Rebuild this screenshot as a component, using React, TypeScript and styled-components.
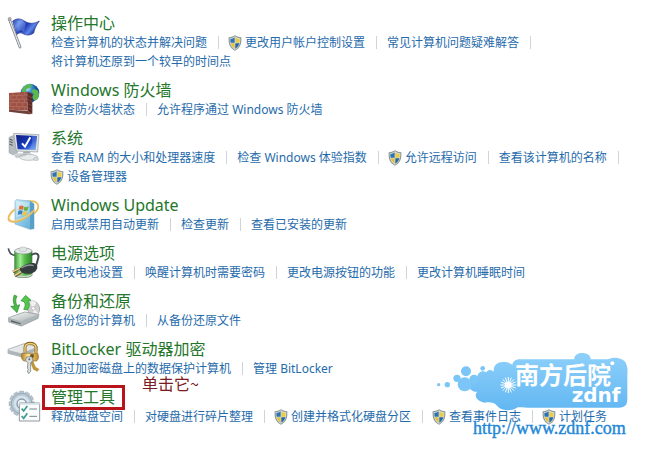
import React from 'react';
import styled, { createGlobalStyle } from 'styled-components';

const GlobalStyle = createGlobalStyle`
  * { box-sizing: border-box; }
  body {
    margin: 0;
    background: #fff;
    font-family: "Noto Sans", "Noto Sans CJK SC", sans-serif;
    font-size: 12px;
  }
`;

const Page = styled.main`
  padding: 13px 8px;
  overflow: hidden;
`;

const Section = styled.section`
  position: relative;
  display: grid;
  grid-template-columns: 32px 1fr;
  column-gap: 11px;
  margin-bottom: 9px;
`;

const IconBox = styled.div`
  padding-top: 4px;
  height: 36px;
  svg { display: block; width: 32px; height: 32px; overflow: visible; }
`;

const Title = styled.h2`
  margin: 0;
  height: 20px;
  font-size: 16px;
  line-height: 20px;
  font-weight: 400;
`;

const TitleLink = styled.a`
  color: #23762a;
  text-decoration: none;
`;

const LinkList = styled.ul`
  display: flex;
  flex-wrap: wrap;
  margin: 0;
  padding: 0;
  list-style: none;
`;

const LinkItem = styled.li`
  display: flex;
  align-items: center;
  height: 19px;
  white-space: nowrap;
  &:not(:last-child)::after {
    content: "";
    width: 1px;
    height: 13px;
    margin: 0 10px 0 11px;
    background: #cfd4d8;
  }
`;

const TaskLink = styled.a`
  display: flex;
  align-items: center;
  color: #1f6bab;
  line-height: 19px;
  text-decoration: none;
  svg { flex: none; width: 14px; height: 16px; margin: 0 3px 0 -1px; }
`;

const Highlight = styled.div`
  position: absolute;
  left: 34px;
  top: -2px;
  width: 83px;
  height: 25px;
  border: 3px solid #b9131c;
  pointer-events: none;
`;

const Note = styled.span`
  position: absolute;
  left: 134px;
  top: -14px;
  color: #7b1c22;
  font-size: 16px;
  line-height: 20px;
  font-family: "Noto Sans CJK SC", sans-serif;
`;

const Watermark = styled.div`
  position: absolute;
  right: 9px;
  top: -37px;
  width: 196px;
  pointer-events: none;
  svg { display: block; width: 196px; height: 64px; }
`;

const SiteLink = styled.a`
  display: block;
  margin: 4px 0 0 37px;
  color: #2387d6;
  font-family: "Liberation Serif", serif;
  font-size: 18px;
  line-height: 20px;
  text-decoration: none;
  white-space: nowrap;
  -webkit-text-stroke: 0.4px #2387d6;
`;

const Shield = () => (
  <svg viewBox="0 0 42 48" aria-hidden="true">
    <path d="M21 1C15 5 9 7 2 7c-1 19 2 32 19 40C38 39 41 26 40 7 33 7 27 5 21 1z" fill="#8c9698" />
    <path d="M21 4C16 8 11 10 5 10c0 16 3 27 16 34 13-7 16-18 16-34-6 0-11-2-16-6z" fill="#dbe3df" />
    <path d="M20 7c-4 3-8 5-13 5 0 4 0 8 1 11h12z" fill="#2e73b4" />
    <path d="M22 7c4 3 8 5 13 5 0 4 0 8-1 11H22z" fill="#e9cc4a" />
    <path d="M8 25h12v16C13 37 10 32 8 25z" fill="#e3c33e" />
    <path d="M34 25H22v16c7-4 10-9 12-16z" fill="#2865a4" />
  </svg>
);

const FlagIcon = () => (
  <svg viewBox="0 0 96 96" aria-hidden="true">
    <defs>
      <linearGradient id="flag" x2="1" y2=".5">
        <stop offset="0" stopColor="#2741a5" /><stop offset=".3" stopColor="#6b91ea" />
        <stop offset=".55" stopColor="#1c36b0" /><stop offset=".8" stopColor="#5c86e8" /><stop offset="1" stopColor="#1a2e94" />
      </linearGradient>
    </defs>
    <path d="M14 12C28 2 40 5 51 13c14 9 28 7 43-1-9 12-14 23-17 36-11 8-23 8-34 1-5-3-12-1-17 4z" fill="url(#flag)" stroke="#25368d" strokeWidth="2" />
    <path d="M26 12c13-5 20 2 28 8l-7 24c-6-5-12-5-17 0" fill="#90b1f4" opacity=".35" />
    <path d="M5 9l31 81" stroke="#777b84" strokeWidth="8" strokeLinecap="round" />
    <path d="M5 9l31 81" stroke="#dfe2e5" strokeWidth="4" strokeLinecap="round" />
    <circle cx="5" cy="6" r="5" fill="#aeb2b8" stroke="#666" />
  </svg>
);

const FirewallIcon = () => (
  <svg viewBox="0 0 96 96" aria-hidden="true">
    <defs>
      <radialGradient id="globe" cx=".35" cy=".25"><stop stopColor="#d9f5ff" /><stop offset=".45" stopColor="#3e9bd6" /><stop offset="1" stopColor="#144c91" /></radialGradient>
    </defs>
    <circle cx="66" cy="27" r="28" fill="url(#globe)" />
    <path d="M47 8c8-7 17-9 25-6l-4 9-12 4-4 10-9 4c-3-9 0-16 4-21zM76 14l13 5c5 8 5 17 1 25l-11 6-7-11 5-8-7-8z" fill="#5cb652" />
    <path d="M3 27l56-4v56L3 77z" fill="#9d5145" />
    <path d="M59 23l14 7v60l-14-9z" fill="#5c2a28" />
    <path d="M3 77l56 3 14 10-11 1L3 83z" fill="#714039" />
    <path d="M3 36l56-3M3 46l56-1M3 56h56M3 67l56 2M15 27v9m18-11v9m17-10v9M8 37v9m18-10v9m18-10v10M15 46v10m18-10v10m17-11v11M8 57v10m18-11v12m18-11v11M15 68v10m18-10v11m17-11v12" stroke="#b87565" strokeWidth="2" />
    <path d="M59 35l14 7M59 47l14 7M59 59l14 7M59 70l14 8" stroke="#8e5148" strokeWidth="2" />
  </svg>
);

const SystemIcon = () => (
  <svg viewBox="0 0 96 96" aria-hidden="true">
    <defs><linearGradient id="screen" x2="1" y2="1"><stop stopColor="#101d79" /><stop offset=".6" stopColor="#1940c8" /><stop offset="1" stopColor="#7aaaf0" /></linearGradient></defs>
    <path d="M3 16l14-6 11 5v48l-13 6L3 62z" fill="#b6bdc1" stroke="#777f83" />
    <path d="M5 22l9 3M5 29l9 3M5 37l9 3" stroke="#485157" strokeWidth="3" />
    <path d="M17 4l76 4-4 52-64-3z" fill="#e1e5e5" stroke="#91999d" strokeWidth="2" />
    <path d="M24 9l63 3-4 42-54-2z" fill="url(#screen)" />
    <path d="M70 10l17 2-4 42-23-1C74 42 75 26 70 10z" fill="#b3d6f6" opacity=".25" />
    <path d="M42 34l9 10 16-28" fill="none" stroke="#fff" strokeWidth="6" />
    <path d="M46 59h20l2 10H44z" fill="#a5adb1" />
    <path d="M16 66l49-3 9 8-50 7z" fill="#dfe4e5" stroke="#a6acaf" />
    <ellipse cx="62" cy="76" rx="27" ry="9" fill="#e8ecec" stroke="#a5adb0" strokeWidth="2" />
    <path d="M22 70l35-3M25 74l27-3" stroke="#929a9f" strokeWidth="2" strokeDasharray="4 2" />
    <ellipse cx="84" cy="81" rx="8" ry="5" fill="#d4d9da" stroke="#939b9e" />
  </svg>
);

const UpdateIcon = () => (
  <svg viewBox="0 0 96 96" aria-hidden="true">
    <defs><linearGradient id="box" x2="1" y2="1"><stop stopColor="#d1eff9" /><stop offset=".55" stopColor="#86c6e6" /><stop offset="1" stopColor="#5ba9d4" /></linearGradient></defs>
    <path d="M24 23C47 3 88-1 91 21c0 11-7 19-16 25" fill="none" stroke="#edbd55" strokeWidth="5" />
    <path d="M25 2l41 4 12 8v75l-12 2-45-16V8z" fill="url(#box)" stroke="#7fb2cf" strokeWidth="2" />
    <path d="M66 7l12 8v74l-12 2z" fill="#5a9fc6" />
    <path d="M25 7l38 4v29L25 55z" fill="#fff" opacity=".3" />
    <path d="M34 22c5-4 9-3 13 0l-2 11c-4-3-8-3-13 0z" fill="#e26e35" />
    <path d="M49 23c4 2 8 2 13-1l-3 12c-4 3-8 2-12 0z" fill="#65b447" />
    <path d="M31 36c5-3 9-2 13 0l-3 11c-4-2-8-2-12 1z" fill="#347fc5" />
    <path d="M46 37c4 2 8 2 12 0l-3 11c-4 3-8 2-12 0z" fill="#efc43d" />
    <path d="M21 31C-2 48-5 68 15 68c23 1 48-15 64-35" fill="none" stroke="#e8b95f" strokeWidth="6" />
    <path d="M20 34C3 49 0 61 14 64c19 1 40-10 57-25" fill="none" stroke="#fae4a0" strokeWidth="2" />
  </svg>
);

const PowerIcon = () => (
  <svg viewBox="0 0 96 96" aria-hidden="true">
    <defs><linearGradient id="battery" x2="1"><stop stopColor="#3a9a37" /><stop offset=".32" stopColor="#a5eb96" /><stop offset=".58" stopColor="#55bd4b" /><stop offset="1" stopColor="#2f842a" /></linearGradient></defs>
    <path d="M1 4c3 16 10 21 21 21" fill="none" stroke="#485153" strokeWidth="5" />
    <path d="M20 12v73c4 9 46 9 52 0V12z" fill="url(#battery)" stroke="#4d7747" strokeWidth="2" />
    <path d="M20 80v5c4 9 46 9 52 0v-5c-12 7-40 7-52 0z" fill="#c7dcc1" stroke="#73876e" />
    <ellipse cx="46" cy="12" rx="26" ry="9" fill="#e5ebe9" stroke="#858d8c" strokeWidth="2" />
    <path d="M34 6c0-8 22-8 22 0v5c-5 4-17 4-22 0z" fill="#dfe5e4" stroke="#899190" />
    <path d="M70 24c15-10 25-3 20 12-5 16-4 24-17 28" fill="none" stroke="#414c50" strokeWidth="6" />
    <path d="M78 48c14 5 13 19 0 28-13 6-28 6-38 0l-7-11c14-11 27-19 45-17z" fill="#343c3e" />
    <path d="M40 63c12-8 26-11 37-7" stroke="#8d9798" strokeWidth="4" fill="none" />
    <path d="M35 65L15 75m25 0L21 87" stroke="#715833" strokeWidth="8" />
    <path d="M35 64L14 74m25 0L20 86" stroke="#eed88d" strokeWidth="4" />
  </svg>
);

const BackupIcon = () => (
  <svg viewBox="0 0 96 96" aria-hidden="true">
    <defs><linearGradient id="drive" x2=".7" y2="1"><stop stopColor="#fff" /><stop offset=".6" stopColor="#c1c7c8" /><stop offset="1" stopColor="#737b7e" /></linearGradient></defs>
    <ellipse cx="76" cy="39" rx="18" ry="22" transform="rotate(-28 76 39)" fill="#cfd2d0" stroke="#91999a" strokeWidth="2" />
    <path d="M74 38L65 20c8-4 15-3 20 4zM77 41l14 14c-4 6-10 8-16 4z" fill="#f6eff4" />
    <circle cx="76" cy="40" r="5" fill="#fff" stroke="#777" />
    <path d="M2 68l48-17 43 7-3 12-50 23-38-12z" fill="url(#drive)" stroke="#858d8f" strokeWidth="2" />
    <path d="M2 68l39 11 52-21v9L42 92 2 80z" fill="#aeb5b7" />
    <path d="M9 76l29 9v3L9 80z" fill="#4c5558" />
    <path d="M19 0c-5 12-4 22 1 33l-12 1 19 19 8-24-8 3C22 21 22 14 27 4z" fill="#4eb94a" stroke="#278c2d" strokeWidth="2" />
    <path d="M39 17L53 1l16 15-9 1c6 9 5 18-2 28l-11-2c6-10 6-16 1-23z" fill="#54c84c" stroke="#268b2c" strokeWidth="2" />
  </svg>
);

const BitLockerIcon = () => (
  <svg viewBox="0 0 96 96" aria-hidden="true">
    <defs><linearGradient id="lock" x2="1"><stop stopColor="#a87824" /><stop offset=".4" stopColor="#ffe796" /><stop offset="1" stopColor="#bd892b" /></linearGradient></defs>
    <path d="M0 19l48-17 41 9-2 12-48 18L0 31z" fill="#e4e7e8" stroke="#949b9d" strokeWidth="2" />
    <path d="M0 21l39 10 49-19v10L39 41 0 31z" fill="#aeb5b8" />
    <path d="M51 28V13C53-4 81-3 84 13v18" fill="none" stroke="#8e6a26" strokeWidth="9" />
    <path d="M51 28V13C53-2 81-1 84 13v18" fill="none" stroke="#f3d57d" strokeWidth="4" />
    <path d="M42 31h47c4 10 3 18-3 23H47c-8-7-9-15-5-23z" fill="url(#lock)" stroke="#987023" strokeWidth="2" />
    <circle cx="72" cy="39" r="6" fill="#70551f" />
    <path d="M72 47l10 25 11 7-5 6-12-6-11-29z" fill="#c39831" stroke="#84651f" />
    <path d="M56 42l15-1 4 11-7 8v25l-6 7-4-8 3-4-3-5 2-16-8-7z" fill="#d8dddd" stroke="#697174" strokeWidth="2" />
    <circle cx="64" cy="49" r="3" fill="#656c6e" />
  </svg>
);

const ToolsIcon = () => (
  <svg viewBox="0 0 96 96" aria-hidden="true">
    <g transform="translate(41 38)">
      {[0, 30, 60, 90, 120, 150, 180, 210, 240, 270, 300, 330].map((a) => (
        <path key={a} d="M-6-38h12l3 11H-9z" transform={`rotate(${a})`} fill="#b6c5d2" stroke="#8c9aa8" />
      ))}
      <circle r="31" fill="#b8c9d6" stroke="#8d9aa6" strokeWidth="2" />
      <circle r="24" fill="#d7e3eb" />
      <circle r="14" fill="#eff5f7" stroke="#8699a8" strokeWidth="4" />
    </g>
    <path d="M34 36h61v54H34z" fill="#fafcfc" stroke="#8e999f" strokeWidth="3" />
    <path d="M34 36h61v5H34z" fill="#d3dde2" />
    <path d="M41 53l6 7 11-15M41 75l6 7 11-15" fill="none" stroke="#3c9b91" strokeWidth="5" />
    <path d="M64 54h23M64 76h23" stroke="#7b878d" strokeWidth="3" />
  </svg>
);

const Logo = () => (
  <svg viewBox="18 11 588 192" role="img" aria-label="南方后院 zdnf">
    <defs><linearGradient id="cloud" x2="0" y2="1"><stop stopColor="#8ed0fa" /><stop offset="1" stopColor="#62b7f2" /></linearGradient></defs>
    <path d="M118 112c-2-17 10-20 24-19 0-15 15-23 27-15 6-9 14-8 22-2-2-18 11-30 30-29 10 0 18 3 26 8 3-13 13-17 27-16h159c-2-25 50-25 49 0h52c14-8 38-7 50 6 7 9 10 23 8 37v77c0 17-8 25-25 25H294c-15 0-24-1-31-1-14 12-48 13-61-4-9-13-28-12-37-10-26-3-34-22-23-33-14 2-27-8-24-24z" fill="url(#cloud)" />
    <g fill="#7bc6f7">
      <circle cx="26" cy="115" r="5" /><circle cx="52" cy="115" r="8" /><circle cx="81" cy="96" r="11" />
      <circle cx="108" cy="75" r="15" /><circle cx="104" cy="114" r="21" /><circle cx="158" cy="66" r="7" /><circle cx="132" cy="99" r="14" />
    </g>
    <path d="M235 92v48M211 116h48M218 99l34 34M252 99l-34 34M226 94l18 44M244 94l-18 44M213 107l44 18M213 125l44-18" stroke="#fff" strokeWidth="3" />
    <circle cx="235" cy="116" r="10" fill="#fff" />
    <text x="255" y="113" fill="#fff" fontFamily="Noto Sans CJK SC, sans-serif" fontWeight="700" fontSize="72">南方后院</text>
    <circle cx="547" cy="51" r="6" fill="#fff" />
    <text x="425" y="166" fill="#fff" fontFamily="DejaVu Sans, sans-serif" fontWeight="700" fontSize="60">zdnf</text>
  </svg>
);

type Task = { label: string; shield?: boolean };
type Category = { title: string; icon: React.FC; tasks: Task[]; marked?: boolean };

const categories: Category[] = [
  { title: '操作中心', icon: FlagIcon, tasks: [
    { label: '检查计算机的状态并解决问题' }, { label: '更改用户帐户控制设置', shield: true },
    { label: '常见计算机问题疑难解答' }, { label: '将计算机还原到一个较早的时间点' } ] },
  { title: 'Windows 防火墙', icon: FirewallIcon, tasks: [
    { label: '检查防火墙状态' }, { label: '允许程序通过 Windows 防火墙' } ] },
  { title: '系统', icon: SystemIcon, tasks: [
    { label: '查看 RAM 的大小和处理器速度' }, { label: '检查 Windows 体验指数' },
    { label: '允许远程访问', shield: true }, { label: '查看该计算机的名称' }, { label: '设备管理器', shield: true } ] },
  { title: 'Windows Update', icon: UpdateIcon, tasks: [
    { label: '启用或禁用自动更新' }, { label: '检查更新' }, { label: '查看已安装的更新' } ] },
  { title: '电源选项', icon: PowerIcon, tasks: [
    { label: '更改电池设置' }, { label: '唤醒计算机时需要密码' },
    { label: '更改电源按钮的功能' }, { label: '更改计算机睡眠时间' } ] },
  { title: '备份和还原', icon: BackupIcon, tasks: [
    { label: '备份您的计算机' }, { label: '从备份还原文件' } ] },
  { title: 'BitLocker 驱动器加密', icon: BitLockerIcon, tasks: [
    { label: '通过加密磁盘上的数据保护计算机' }, { label: '管理 BitLocker' } ] },
  { title: '管理工具', icon: ToolsIcon, marked: true, tasks: [
    { label: '释放磁盘空间' }, { label: '对硬盘进行碎片整理' }, { label: '创建并格式化硬盘分区', shield: true },
    { label: '查看事件日志', shield: true }, { label: '计划任务', shield: true } ] },
];

export default function App() {
  return (
    <>
      <GlobalStyle />
      <Page>
        {categories.map(({ title, icon: Icon, tasks, marked }) => (
          <Section key={title}>
            <IconBox><Icon /></IconBox>
            <div>
              <Title><TitleLink href="#">{title}</TitleLink></Title>
              <LinkList>
                {tasks.map((task) => (
                  <LinkItem key={task.label}>
                    <TaskLink href="#">{task.shield && <Shield />}{task.label}</TaskLink>
                  </LinkItem>
                ))}
              </LinkList>
            </div>
            {marked && (
              <>
                <Highlight />
                <Note>单击它~</Note>
                <Watermark>
                  <Logo />
                  <SiteLink href="#">http://www.zdnf.com</SiteLink>
                </Watermark>
              </>
            )}
          </Section>
        ))}
      </Page>
    </>
  );
}
